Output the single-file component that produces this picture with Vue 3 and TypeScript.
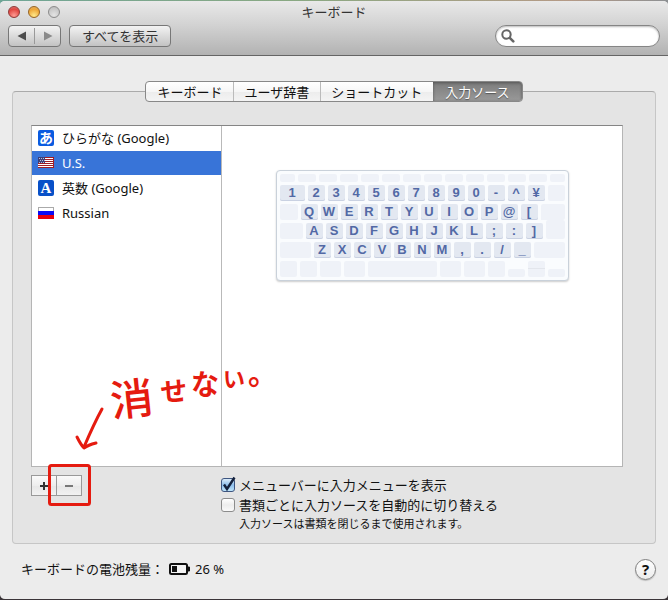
<script setup lang="ts">
import { ref } from 'vue'

type IconKind = 'hiragana' | 'us' | 'latin' | 'ru'

interface Source {
  id: IconKind
  label: string
}

interface Key {
  w: number
  label?: string
  kind?: string
}

const tabs = ['キーボード', 'ユーザ辞書', 'ショートカット', '入力ソース']
const activeTab = ref(3)

const sources: Source[] = [
  { id: 'hiragana', label: 'ひらがな (Google)' },
  { id: 'us', label: 'U.S.' },
  { id: 'latin', label: '英数 (Google)' },
  { id: 'ru', label: 'Russian' },
]
const selected = ref<IconKind>('us')

const showMenu = ref(true)
const perDocument = ref(false)
const query = ref('')

const letters = (text: string): Key[] => [...text].map((label) => ({ w: 17, label }))
const blanks = (...widths: number[]): Key[] => widths.map((w) => ({ w }))

const rows: Key[][] = [
  blanks(15, ...Array<number>(12).fill(18), 15),
  [{ w: 25, label: '1' }, ...letters('234567890-^¥'), ...blanks(17)],
  [...blanks(18), ...letters('QWERTYUIOP@['), { w: 24, kind: 'enter-top' }],
  [...blanks(23), ...letters('ASDFGHJKL;:]'), { w: 19, kind: 'enter-bottom' }],
  [...blanks(31), ...letters('ZXCVBNM,./_'), ...blanks(31)],
  [
    ...blanks(17, 17, 21, 21, 69, 21, 21, 17),
    { w: 17, kind: 'low' },
    { w: 17, kind: 'arrows' },
    { w: 17, kind: 'low' },
  ],
]
</script>

<template>
  <div class="window">
    <header class="titlebar">
      <div class="title-row">
        <div class="lights">
          <button class="light close" type="button" aria-label="閉じる"></button>
          <button class="light minimize" type="button" aria-label="しまう"></button>
          <button class="light zoom" type="button" aria-label="拡大" disabled></button>
        </div>
        <h1>キーボード</h1>
      </div>
      <div class="toolbar">
        <div class="history">
          <button type="button" aria-label="戻る">
            <svg width="10" height="10" viewBox="0 0 10 10"><path d="M9 0.500V9.500L0.500 5Z" fill="#4c4c4c" /></svg>
          </button>
          <button type="button" aria-label="進む">
            <svg width="10" height="10" viewBox="0 0 10 10"><path d="M1 0.500V9.500L9.500 5Z" fill="#8a8a8a" /></svg>
          </button>
        </div>
        <button class="show-all" type="button">すべてを表示</button>
        <label class="search">
          <svg width="14" height="14" viewBox="0 0 14 14" fill="none" stroke="#666">
            <circle cx="5.5" cy="5.5" r="4.2" stroke-width="2" />
            <path d="M8.8 8.8L12.3 12.3" stroke-width="2.6" stroke-linecap="round" />
          </svg>
          <input v-model="query" type="text" aria-label="検索" />
        </label>
      </div>
    </header>

    <main class="content">
      <nav class="tabs">
        <button
          v-for="(tab, i) in tabs"
          :key="tab"
          type="button"
          :class="{ active: i === activeTab }"
          @click="activeTab = i"
        >
          {{ tab }}
        </button>
      </nav>

      <section class="panel">
        <div class="split">
          <ul class="sources">
            <li v-for="s in sources" :key="s.id">
              <button type="button" :class="{ selected: selected === s.id }" @click="selected = s.id">
                <svg v-if="s.id === 'us'" width="16" height="16" viewBox="0 0 16 16" shape-rendering="crispEdges">
                  <rect y="2" width="16" height="11" fill="#a01c24" />
                  <path d="M0 3.5H15M0 5.5H15M0 7.5H15M0 9.5H15M0 11.5H15" stroke="#fff" />
                  <rect y="2" width="7" height="6" fill="#3c3f78" />
                  <path d="M1 3.500H7M2 5.500H7M1 7.500H7" stroke="#b9bcd8" stroke-dasharray="1 1" />
                </svg>
                <svg v-else-if="s.id === 'ru'" width="16" height="16" viewBox="0 0 16 16" shape-rendering="crispEdges">
                  <rect y="2" width="16" height="4" fill="#fff" />
                  <path d="M0.5 6V2.5H15.5V6" stroke="#aaa" fill="none" />
                  <rect y="6" width="16" height="4" fill="#0a0af5" />
                  <rect y="10" width="16" height="4" fill="#e8000c" />
                </svg>
                <svg v-else class="glyph" width="16" height="16" viewBox="0 0 16 16">
                  <rect width="16" height="16" rx="2" :fill="s.id === 'hiragana' ? '#0a5be0' : '#0850c8'" />
                  <text
                    x="8"
                    y="13"
                    text-anchor="middle"
                    fill="#fff"
                    :class="s.id"
                  >{{ s.id === 'hiragana' ? 'あ' : 'A' }}</text>
                </svg>
                <span>{{ s.label }}</span>
              </button>
            </li>
          </ul>
          <div class="preview">
            <div class="keyboard">
              <div v-for="(row, r) in rows" :key="r" class="key-row">
                <span
                  v-for="(key, k) in row"
                  :key="k"
                  :class="['key', key.kind, { lettered: key.label }]"
                  :style="{ width: key.w + 'px' }"
                >{{ key.label }}</span>
              </div>
            </div>
          </div>
        </div>

        <div class="controls">
          <div class="edit">
            <button type="button" aria-label="追加">
              <svg width="10" height="10" viewBox="0 0 10 10"><path d="M5 1V9M1 5H9" stroke="#333" stroke-width="2" /></svg>
            </button>
            <button type="button" aria-label="削除">
              <svg width="10" height="10" viewBox="0 0 10 10"><path d="M1 5H9" stroke="#777" stroke-width="2" /></svg>
            </button>
          </div>
          <div class="options">
            <label><input v-model="showMenu" type="checkbox" /><span class="box">
              <svg width="18" height="18" viewBox="0 0 18 18"><path d="M5 8.500L8 13L15.500 1.500" fill="none" stroke="#14213c" stroke-width="2.400" /></svg>
            </span>メニューバーに入力メニューを表示</label>
            <label><input v-model="perDocument" type="checkbox" /><span class="box">
              <svg width="18" height="18" viewBox="0 0 18 18"><path d="M5 8.500L8 13L15.500 1.500" fill="none" stroke="#14213c" stroke-width="2.400" /></svg>
            </span>書類ごとに入力ソースを自動的に切り替える</label>
            <p>入力ソースは書類を閉じるまで使用されます。</p>
          </div>
          <svg class="markup" width="260" height="150" viewBox="40 360 260 150">
            <rect x="49.500" y="465.500" width="40" height="39" rx="2" fill="none" stroke="#e51b10" stroke-width="3" />
            <path
              d="M102 409C97 418 90 433 84 447M77 437C79 441 81 445 84 448C88 445 92 444 96 443"
              fill="none"
              stroke="#e51b10"
              stroke-width="3"
              stroke-linecap="round"
              stroke-linejoin="round"
            />
            <g fill="#e51b10">
              <text class="kanji" x="112" y="417" rotate="-6" font-size="43">消</text>
              <text x="161" y="402" rotate="-4" font-size="27">せ</text>
              <text x="191" y="395" font-size="28">な</text>
              <text x="223" y="387" font-size="22">い</text>
              <text x="248" y="384" font-size="30">。</text>
            </g>
          </svg>
        </div>
      </section>
    </main>

    <footer class="status">
      <span>キーボードの電池残量：</span>
      <svg width="22" height="14" viewBox="0 0 22 14">
        <rect x="1" y="2" width="17" height="10" rx="1.500" fill="#f4f4f4" stroke="#111" stroke-width="2" />
        <rect x="3" y="4" width="5" height="6" fill="#111" />
        <path d="M19 5H20.500V9H19Z" fill="#111" stroke="#111" />
      </svg>
      <span>26 %</span>
      <button class="help" type="button" aria-label="ヘルプ">?</button>
    </footer>
  </div>
</template>

<style>
body {
  margin: 0;
  background: linear-gradient(90deg, #6fa596, #8aa882 45%, #b59a86 85%, #8d9093) top / 100% 8px no-repeat, #3a3438;
}
</style>

<style scoped>
.window {
  box-sizing: border-box;
  display: flex;
  flex-direction: column;
  min-height: 100vh;
  border: solid transparent;
  border-width: 1px 0;
  border-radius: 5px;
  background: #ececec padding-box;
  overflow: hidden;
  color: #111;
  font: 13px/20px "Noto Sans", "Noto Sans CJK JP", sans-serif;
}

button,
input {
  font: inherit;
  color: inherit;
}

button {
  margin: 0;
  padding: 0;
  border: 0;
  background: none;
}

svg {
  display: block;
  flex: none;
}

.titlebar {
  display: flex;
  flex-direction: column;
  gap: 2px;
  padding-bottom: 8px;
  border-bottom: 1px solid #656565;
  background: linear-gradient(#e9e9e9, #d2d2d2 45%, #b2b2b2);
}

.title-row {
  display: grid;
  grid-template-columns: 1fr auto 1fr;
  align-items: center;
  height: 22px;
  padding: 0 8px;
}

.lights {
  display: flex;
  gap: 8px;
}

.light {
  width: 12px;
  height: 12px;
  border: 1px solid #8b8b8b;
  border-radius: 50%;
  background: radial-gradient(circle at 50% 80%, #e4e4e4, #b8b8b8);
}

.close {
  border-color: #8f3836;
  background: radial-gradient(circle at 50% 85%, #ff9c94, #e0443f 65%, #d98a86);
}

.minimize {
  border-color: #956425;
  background: radial-gradient(circle at 50% 85%, #ffe98a, #eda536 65%, #e3b473);
}

h1 {
  margin: 0;
  font: inherit;
  color: #333;
}

.toolbar {
  display: flex;
  gap: 8px;
  padding: 0 8px;
}

.history,
.show-all {
  box-sizing: border-box;
  height: 22px;
  border: 1px solid #777;
  border-radius: 4px;
  background: linear-gradient(#f3f3f3, #c3c3c3);
  color: #333;
}

.history {
  display: flex;
  align-items: center;
  width: 53px;
}

.history button {
  display: flex;
  flex: 1;
  justify-content: center;
  align-items: center;
  height: 16px;
}

.history button + button {
  border-left: 1px solid #999;
}

.show-all {
  padding: 0 12px;
}

.search {
  box-sizing: border-box;
  display: flex;
  align-items: center;
  gap: 4px;
  width: 165px;
  height: 22px;
  margin-left: auto;
  padding: 0 8px 0 5px;
  border: 1px solid #858585;
  border-radius: 11px;
  background: #fff;
  box-shadow: inset 0 1px 2px #bbb;
}

.search input {
  flex: 1;
  min-width: 0;
  padding: 0;
  border: 0;
  outline: 0;
  background: none;
}

.content {
  display: flex;
  flex: 1;
  flex-direction: column;
  padding: 25px 12px 0;
}

.tabs {
  position: relative;
  z-index: 1;
  display: flex;
  align-self: center;
  box-sizing: border-box;
  height: 21px;
  border: 1px solid #888;
  border-radius: 4px;
  background: linear-gradient(#fff, #f6f6f6 50%, #ececec 50%, #f4f4f4);
  overflow: hidden;
}

.tabs button {
  display: flex;
  align-items: center;
  padding: 0 11px;
}

.tabs button + button {
  box-shadow: inset 1px 0 #bbb;
}

.tabs .active,
.tabs button + .active {
  padding: 0 12px;
  background: linear-gradient(#7c7c7c, #999);
  color: #fff;
  box-shadow: inset 0 1px 3px #555;
  text-shadow: 0 1px 1px #555;
}

.panel {
  display: flex;
  flex: 1;
  flex-direction: column;
  gap: 8px;
  margin-top: -11px;
  padding: 33px 32px 0 18px;
  border: 1px solid #c6c6c6;
  border-top-color: #aaa;
  border-radius: 4px;
  background: #e4e4e4;
}

.split {
  display: flex;
  flex: 1;
  border: 1px solid #b5b5b5;
  border-top-color: #858585;
  background: #fff;
}

.sources {
  display: flex;
  flex: none;
  flex-direction: column;
  gap: 1px;
  width: 189px;
  margin: 0;
  padding: 0;
  border-right: 1px solid #b9b9b9;
  list-style: none;
}

.sources button {
  display: flex;
  align-items: center;
  gap: 8px;
  width: 100%;
  height: 24px;
  padding: 0 6px;
}

.sources .selected {
  background: #3874d8;
  color: #fff;
}

.glyph {
  overflow: visible;
}

.hiragana {
  font: 700 14px "Noto Sans CJK JP", sans-serif;
}

.latin {
  font: 700 15px "Liberation Serif", serif;
}

.preview {
  display: flex;
  flex: 1;
  justify-content: center;
  align-items: flex-start;
  padding-top: 44px;
}

.keyboard {
  display: flex;
  flex-direction: column;
  gap: 3px;
  padding: 3px;
  border: 1px solid #c9d1da;
  border-radius: 4px;
  background: #fafcfe;
  box-shadow: 0 1px 2px #ccc;
}

.key-row {
  display: flex;
  gap: 3px;
  height: 16px;
}

.key-row:first-child {
  height: 8px;
}

.key {
  box-sizing: border-box;
  border-radius: 2px;
  background: #eff2f8;
  color: #5269a5;
  font: 700 13px/16px "Liberation Sans", sans-serif;
  text-align: center;
}

.lettered {
  background: #e3e8f1;
  box-shadow: inset 0 -1px #c9d1e2;
}

.enter-top {
  border-bottom-left-radius: 0;
}

.enter-bottom {
  height: 19px;
  margin-top: -3px;
}

.low {
  height: 8px;
  margin-top: 8px;
}

.arrows {
  background: linear-gradient(#eff2f8 7px, #e3e6ec 7px, #e3e6ec 8px, #eff2f8 8px);
}

.controls {
  position: relative;
  display: flex;
  height: 68px;
}

.edit {
  display: flex;
  box-sizing: border-box;
  width: 51px;
  height: 21px;
  margin-right: 139px;
  border: 1px solid #999;
  background: linear-gradient(#fafafa, #ededed 50%, #e6e6e6 50%, #f2f2f2);
}

.edit button {
  display: flex;
  flex: 1;
  justify-content: center;
  align-items: center;
}

.edit button + button {
  border-left: 1px solid #999;
}

.options {
  display: flex;
  flex-direction: column;
}

.options label {
  position: relative;
  display: flex;
  align-items: center;
  gap: 4px;
  height: 20px;
}

.options input {
  position: absolute;
  opacity: 0;
}

.box {
  box-sizing: border-box;
  display: flex;
  justify-content: center;
  align-items: center;
  width: 14px;
  height: 14px;
  border: 1px solid #8c8c8c;
  border-radius: 3px;
  background: linear-gradient(#fff, #ededed 50%, #fafafa);
}

.box svg {
  visibility: hidden;
}

input:checked + .box {
  border-color: #3d5580;
  background: linear-gradient(#dcecfa, #8dbdea 50%, #bfe5fb);
}

input:checked + .box svg {
  visibility: visible;
}

.options p {
  margin: 0 0 0 18px;
  font-size: 11px;
  line-height: 18px;
}

.markup {
  position: absolute;
  top: -115px;
  left: 9px;
  overflow: visible;
  pointer-events: none;
}

.markup text {
  font-family: "Noto Sans CJK JP", sans-serif;
  font-weight: 700;
}

.markup .kanji {
  font-weight: 500;
}

.status {
  display: flex;
  align-items: center;
  gap: 4px;
  height: 50px;
  padding: 0 12px 5px 21px;
}

.status svg {
  margin-left: 1px;
}

.help {
  box-sizing: border-box;
  width: 21px;
  height: 21px;
  margin-left: auto;
  border: 1px solid #808080;
  border-radius: 50%;
  background: linear-gradient(#fff, #ececec);
  box-shadow: 0 1px 1px #bbb;
  font-size: 15px;
  font-weight: 700;
  line-height: 18px;
}
</style>
